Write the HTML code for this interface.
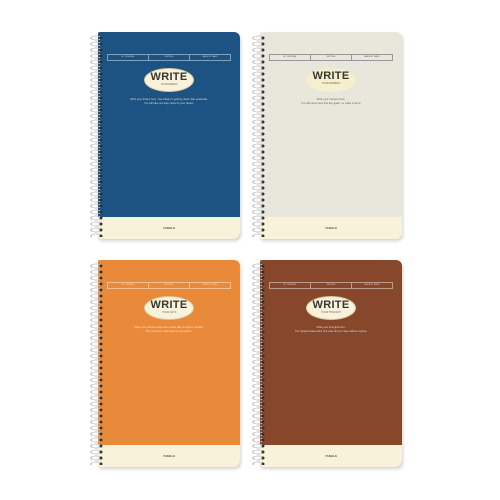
<!DOCTYPE html>
<html><head><style>
body{margin:0;width:500px;height:500px;background:#fff;position:relative;overflow:hidden;font-family:"Liberation Sans",sans-serif}
.nb{position:absolute;width:142px;height:207px;border-radius:2px 6px 6px 2px;overflow:hidden;box-shadow:1px 2px 3px rgba(0,0,0,.18)}
.foot{position:absolute;left:0;right:0;bottom:0;height:22px;background:#f8f2da}
.foot span{position:absolute;left:0;right:0;top:9px;text-align:center;font-size:3px;font-weight:bold;color:#555}
.bar{position:absolute;left:9px;right:9px;top:22px;height:5px;border:0.6px solid rgba(255,255,255,.45);display:flex;font-size:2px;color:rgba(255,255,255,.7);align-items:center}
.bar div{flex:1;text-align:center;border-right:0.6px solid rgba(255,255,255,.45);line-height:5px}
.bar div:last-child{border:none}
.oval{position:absolute;left:46px;top:36px;width:50px;height:24px;border-radius:50%;background:#f8f2da;border:1.5px solid #d9c9a0;box-sizing:border-box;text-align:center}
.oval b{display:block;font-size:11px;color:#3a3630;margin-top:3px;line-height:11px;letter-spacing:.3px}
.oval i{display:block;font-style:normal;font-size:2.5px;color:#666;line-height:4px}
.txt{position:absolute;left:0;right:0;top:66px;text-align:center;font-size:2.6px;line-height:4px;color:rgba(255,255,255,.75)}
.sp{position:absolute;width:14px;height:202px}
.sp .loops{position:absolute;left:0;top:0;width:12px;height:100%;background:radial-gradient(ellipse 6px 2.4px at 7px 3px,transparent 70%,#c4c4c4 72%,#c4c4c4 95%,transparent 100%) 0 0/12px 6px repeat-y}
.sp .holes{position:absolute;left:10px;top:0;width:4px;height:100%;background:radial-gradient(circle at 2px 3px,#333 1.3px,transparent 1.6px) 0 0/4px 6px repeat-y}
.lt .bar{border-color:#999;color:#555}.lt .bar div{border-color:#999}
.lt .txt{color:#666}
.lt .oval{border:none;background:#f6efce}
</style></head><body>

<div class="nb" style="left:98px;top:32px;background:#1d5382">
 <div class="bar"><div>MY ORIGINAL</div><div>WRITING</div><div>MADE BY HAND</div></div>
 <div class="oval"><b>WRITE</b><i>YOUR DREAM</i></div>
 <div class="txt">Write your dream here. Your dream is getting closer than yesterday.<br>You will take one step closer to your dream.</div>
 <div class="foot"><span>YANGLE</span></div>
</div>
<div class="sp" style="left:89px;top:35px"><div class="loops"></div><div class="holes"></div></div>

<div class="nb lt" style="left:260px;top:32px;background:#e9e6dc">
 <div class="bar"><div>MY ORIGINAL</div><div>WRITING</div><div>MADE BY HAND</div></div>
 <div class="oval"><b>WRITE</b><i>YOUR MOMENT</i></div>
 <div class="txt">Write your moment here.<br>You will never have this day again, so make it count.</div>
 <div class="foot"><span>YANGLE</span></div>
</div>
<div class="sp" style="left:251px;top:35px"><div class="loops"></div><div class="holes"></div></div>

<div class="nb" style="left:98px;top:260px;background:#e88a3a">
 <div class="bar"><div>MY ORIGINAL</div><div>WRITING</div><div>MADE BY HAND</div></div>
 <div class="oval"><b>WRITE</b><i>YOUR DAYS</i></div>
 <div class="txt">Write your precious days here. Each day is a gift to yourself.<br>Do not let your days pass by unnoticed.</div>
 <div class="foot"><span>YANGLE</span></div>
</div>
<div class="sp" style="left:89px;top:263px"><div class="loops"></div><div class="holes"></div></div>

<div class="nb" style="left:260px;top:260px;background:#87472b">
 <div class="bar"><div>MY ORIGINAL</div><div>WRITING</div><div>MADE BY HAND</div></div>
 <div class="oval"><b>WRITE</b><i>YOUR THOUGHT</i></div>
 <div class="txt">Write your thoughts here.<br>The clearest ideas think and write all your days without regrets.</div>
 <div class="foot"><span>YANGLE</span></div>
</div>
<div class="sp" style="left:251px;top:263px"><div class="loops"></div><div class="holes"></div></div>

</body></html>
